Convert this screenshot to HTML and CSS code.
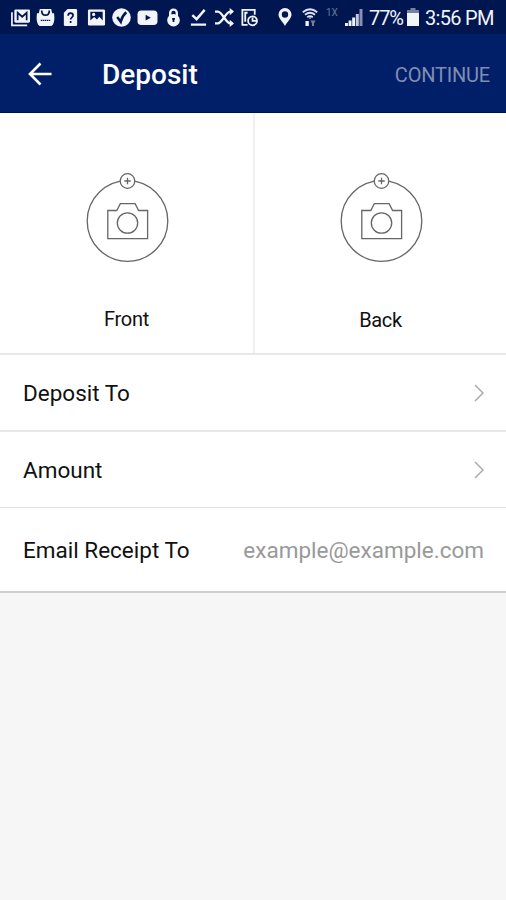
FILE: index.html
```html
<!DOCTYPE html>
<html lang="en">
<head>
    <meta charset="UTF-8">
    <meta name="viewport" content="width=device-width, initial-scale=1.0">
    <title>Deposit</title>
    <link rel="stylesheet" href="styles.css">
</head>
<body>
    <div class="status-bar">
        <div class="notifications">
            <!-- mail -->
            <svg class="icon" viewBox="0 0 20 20"><path d="M1 4.500v13.700H17" fill="none" stroke="#f2f4fb" stroke-width="1.800"/><rect x="3.500" y="1.500" width="16.500" height="14" rx="1.500"/><path class="cut" d="M7 13V5l4.800 4.200L16.500 5v8"/></svg>
            <!-- shop bag -->
            <svg class="icon" viewBox="0 0 20 20"><path d="M4 1h12l1 4.500h2q1 8-1 11.500-1 2-3 2H5q-2 0-3-2-2-3.500-1-11.500h2z"/><path class="cut" d="M6 2.500q0 5 4 5t4-5"/><path class="cut thin" d="M5 13h10" stroke-dasharray="1.500 .6"/></svg>
            <!-- unknown file -->
            <svg class="icon" viewBox="0 0 20 20"><path d="M7 1h8.500Q17 1 17 2.500v15q0 1.500-1.500 1.500h-11Q3 19 3 17.500V5z"/><path class="cut" d="M7.500 8.200q0-2.700 2.600-2.700t2.600 2.500c0 1.700-2.600 2-2.600 4.200M10.100 13.700v2"/></svg>
            <!-- picture -->
            <svg class="icon" viewBox="0 0 20 20"><rect x="1" y="1.500" width="18" height="17" rx="1.500"/><path class="hole" d="M3.500 4h13v9.200L13 9.200l-2.500 3-3-2.800-4 3.800z"/><circle cx="7" cy="6.800" r="1.700"/></svg>
            <!-- check circle -->
            <svg class="icon" viewBox="0 0 20 20"><circle cx="10" cy="10" r="9.800"/><path class="cut bold" d="M5.500 9.500l3.700 5Q10.500 8.500 15 4.500"/></svg>
            <!-- video -->
            <svg class="icon wide" viewBox="0 0 21 20"><rect x="0" y="2.500" width="21" height="15.500" rx="4"/><path class="hole" d="M8.500 7.200l5.500 3-5.500 3z"/></svg>
            <!-- lock -->
            <svg class="icon" viewBox="0 0 20 20"><path d="M6.500 9V5.200a3.500 3.500 0 0 1 7 0V9" fill="none" stroke="#f2f4fb" stroke-width="2.500"/><circle cx="10" cy="12.800" r="6.600"/><path class="cut" d="M10 10.800v4M8.500 11.500h3"/></svg>
            <!-- download done -->
            <svg class="icon line" viewBox="0 0 20 20"><path d="M3.500 7.500l4.500 4.200L16.500 2M2 17.500h16"/></svg>
            <!-- shuffle -->
            <svg class="icon line shuffle" viewBox="0 0 20 20"><path d="M0 3.800h3c4.500 0 8.500 12.400 13 12.400h2.500M0 16.200h3c4.500 0 8.500-12.400 13-12.400h2.500"/><path class="heads" d="M15.500 0l4.500 3.800-4.500 3.800zM15.500 12.400l4.500 3.800-4.500 3.800z"/></svg>
            <!-- scheduled file -->
            <svg class="icon line file" viewBox="0 0 20 20"><path d="M8 17.800H2.500V2h13v5M5.500 14.500V5H8"/><circle cx="13.200" cy="13.500" r="4.700"/><path d="M13.200 10v3.500h4"/></svg>
        </div>
        <div class="system">
            <svg class="pin" viewBox="0 0 14 18"><path d="M7 0a6.500 6.500 0 0 0-6.500 6.500C.5 10.500 5 14 7 18c2-4 6.500-7.500 6.500-11.500A6.500 6.500 0 0 0 7 0zm0 3.300a3.200 3.200 0 1 1 0 6.400 3.200 3.200 0 0 1 0-6.400z" fill-rule="evenodd"/></svg>
            <svg class="wifi" viewBox="0 0 16 18"><path d="M.8 4.300q7.200-6 14.400 0M3 6.800q5-4 10 0M5.200 9.200q2.800-2.200 5.600 0" fill="none" stroke="#dfe4f2" stroke-width="1.800"/><path d="M6.800 9.500h2.400L8 11.200zM3.500 13h3.300v5H3.500z"/><path class="off" d="M8.500 12.500h5L12 15.500V18h-2v-2.500z"/></svg>
            <span class="network">1X</span>
            <svg class="signal" viewBox="0 0 18 18"><path d="M0 15h2.900v3H0zM3.600 12.500h2.900V18H3.600zM7.200 9.500h2.900V18H7.200z"/><path class="weak" d="M10.800 6h3v12h-3z"/><path class="weaker" d="M14.500 1h3v17h-3z"/></svg>
            <span class="percent">77%</span>
            <svg class="battery" viewBox="0 0 12 18"><path class="off" d="M3.500 0h5v2H12v4H0V2h3.500z"/><path d="M0 5h12v13H0z"/></svg>
            <span class="time">3:56 PM</span>
        </div>
    </div>

    <header class="header">
        <svg class="back" viewBox="0 0 24 24"><path d="M23.500 12H2.500M12.500 1.500L2 12l10.500 10.500"/></svg>
        <h1>Deposit</h1>
        <button class="continue">CONTINUE</button>
    </header>

    <div class="checks">
        <div class="check">
            <svg class="camera" viewBox="0 0 84 92">
                <circle cx="42.500" cy="49" r="40.300"/>
                <circle class="plus" cx="42.500" cy="9" r="7.300"/>
                <path d="M42.500 5.800v6.400M39.300 9h6.400"/>
                <path d="M22.800 38.500h9l3.500-6.800h14.800l3.500 6.800h9v28.200H22.800z"/>
                <circle cx="42.500" cy="51" r="10.200"/>
            </svg>
            <span>Front</span>
        </div>
        <div class="check">
            <svg class="camera" viewBox="0 0 84 92">
                <circle cx="42.500" cy="49" r="40.300"/>
                <circle class="plus" cx="42.500" cy="9" r="7.300"/>
                <path d="M42.500 5.800v6.400M39.300 9h6.400"/>
                <path d="M22.800 38.500h9l3.500-6.800h14.800l3.500 6.800h9v28.200H22.800z"/>
                <circle cx="42.500" cy="51" r="10.200"/>
            </svg>
            <span class="back-label">Back</span>
        </div>
    </div>

    <div class="row deposit-to">
        <span>Deposit To</span>
        <svg class="chevron" viewBox="0 0 10 18"><path d="M1 1l8 8-8 8"/></svg>
    </div>
    <div class="row amount">
        <span>Amount</span>
        <svg class="chevron" viewBox="0 0 10 18"><path d="M1 1l8 8-8 8"/></svg>
    </div>
    <div class="row email">
        <span>Email Receipt To</span>
        <span class="placeholder">example@example.com</span>
    </div>
</body>
</html>
```
FILE: styles.css
```css
* {
    box-sizing: border-box;
}
body {
    margin: 0;
    min-height: 900px;
    background-color: #f6f6f6;
    font-family: Roboto, sans-serif;
    color: #111;
}
svg {
    display: block;
    flex: none;
}
.status-bar {
    display: flex;
    height: 34px;
    padding-left: 8px;
    background-color: #001650;
    color: #f2f4fb;
    fill: #f2f4fb;
}
.notifications {
    display: flex;
    align-items: center;
    justify-content: space-around;
    width: 254px;
}
.icon {
    width: 19px;
    height: 19px;
}
.wide {
    width: 21px;
}
.line {
    fill: none;
    stroke: #f2f4fb;
    stroke-width: 2.6;
}
.shuffle {
    stroke-width: 2.4;
}
.heads {
    fill: #f2f4fb;
    stroke: none;
}
.file {
    stroke-width: 1.9;
}
.cut {
    fill: none;
    stroke: #001650;
    stroke-width: 1.8;
}
.thin {
    stroke-width: 1.2;
}
.bold {
    stroke-width: 2.6;
}
.hole {
    fill: #001650;
}
.system {
    display: flex;
    align-items: center;
    margin-left: 16px;
    white-space: nowrap;
}
.pin {
    width: 14px;
    height: 18px;
}
.wifi {
    width: 16px;
    height: 18px;
    margin-left: 10px;
}
.off {
    fill: #76809f;
}
.weak {
    fill: #c3c9da;
}
.weaker {
    fill: #8790ad;
}
.network {
    width: 19px;
    margin: -9px 0 0 8px;
    font-size: 10px;
    color: #69759c;
}
.signal {
    width: 18px;
    height: 18px;
}
.percent {
    width: 38px;
    margin: 2px 0 0 6px;
    font-size: 20px;
    letter-spacing: -1.1px;
}
.battery {
    width: 12px;
    height: 18px;
}
.time {
    margin: 2px 0 0 6px;
    font-size: 20px;
    letter-spacing: -0.7px;
}
.header {
    display: flex;
    align-items: center;
    height: 79px;
    padding: 2px 16px 0 28px;
    background-color: #001f68;
    border-bottom: 1px solid #00104f;
    color: #fff;
}
.back {
    width: 24px;
    height: 24px;
    fill: none;
    stroke: #fff;
    stroke-width: 2.6;
}
.header h1 {
    margin: 0 0 0 50px;
    font-size: 28px;
    font-weight: 500;
}
.continue {
    margin: 2px 0 0 auto;
    padding: 0;
    border: none;
    background: none;
    font-family: inherit;
    font-size: 20px;
    letter-spacing: -0.2px;
    color: #808db3;
}
.checks {
    display: flex;
    height: 242px;
    background-color: #fff;
    border-bottom: 2px solid #e8e8e8;
}
.check {
    display: flex;
    flex: 1;
    flex-direction: column;
    align-items: center;
    padding-top: 59px;
    font-size: 20px;
    line-height: 24px;
    letter-spacing: -0.3px;
}
.check:first-child {
    flex: 0 0 255px;
    border-right: 2px solid #f0f0f0;
}
.camera {
    width: 84px;
    height: 92px;
    margin-bottom: 43px;
    fill: none;
    stroke: #666;
    stroke-width: 1.3;
}
.plus {
    fill: #fff;
}
.back-label {
    margin-top: 1px;
}
.row {
    display: flex;
    align-items: center;
    justify-content: space-between;
    padding: 1px 22px 0 23px;
    background-color: #fff;
    font-size: 22.5px;
}
.deposit-to {
    height: 77px;
    border-bottom: 2px solid #e8e8e8;
}
.amount {
    height: 76px;
    border-bottom: 1px solid #e4e4e4;
}
.email {
    height: 85px;
    padding-top: 0;
    border-bottom: 2px solid #cfcfcf;
}
.chevron {
    width: 10px;
    height: 18px;
    margin-top: -1px;
    fill: none;
    stroke: #aaa;
    stroke-width: 1.5;
}
.placeholder {
    color: #999;
}
```
